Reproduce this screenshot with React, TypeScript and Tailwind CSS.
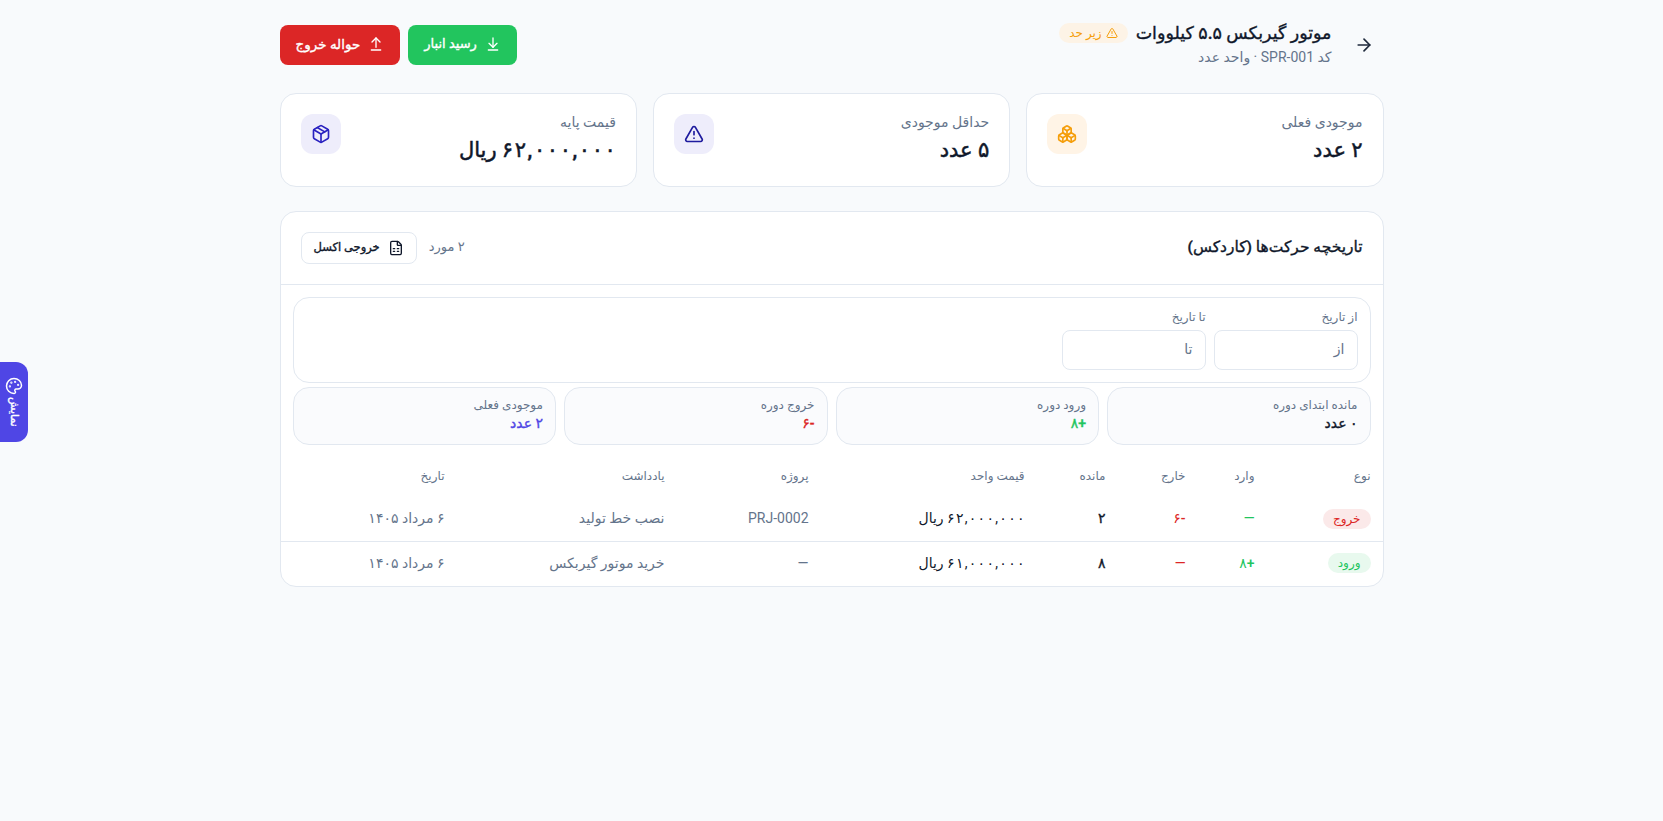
import { ArrowRight, ArrowDownToLine, ArrowUpFromLine, Boxes, FileSpreadsheet, Package, Palette, TriangleAlert } from "lucide-react";

const font = "font-['Roboto','Noto_Sans','DejaVu_Sans',sans-serif]";
// the bold cut of the fallback Arabic face runs too wide, so thicken the medium one
const heavy = "font-medium [-webkit-text-stroke:0.35px_currentColor]";
const heavier = "font-medium [-webkit-text-stroke:0.5px_currentColor]";

// letter-spacing is ignored on this script, so space the digits with a gap
function Digits({ value, gap }: { value: string; gap: string }) {
	return (
		<span dir="ltr" className={`inline-flex ${gap}`}>
			{value.split("").map((c, i) => (
				<span key={i}>{c}</span>
			))}
		</span>
	);
}

const stats = [
	{ label: "موجودی فعلی", num: "۲", unit: "عدد", box: "bg-[#fff4e6]", icon: <Boxes className="w-5 h-5 text-[#f59e0b]" /> },
	{ label: "حداقل موجودی", num: "۵", unit: "عدد", box: "bg-[#eeedfb]", icon: <TriangleAlert className="w-5 h-5 text-[#1e1b9e]" /> },
	{ label: "قیمت پایه", num: "۶۲,۰۰۰,۰۰۰", unit: "ریال", box: "bg-[#eeedfb]", icon: <Package className="w-5 h-5 text-[#2a22c0]" /> },
];

const summary = [
	{ label: "مانده ابتدای دوره", value: "۰ عدد", color: "text-[#0f172a]" },
	{ label: "ورود دوره", value: "+۸", color: "text-[#22c55e]" },
	{ label: "خروج دوره", value: "-۶", color: "text-[#dc2626]" },
	{ label: "موجودی فعلی", value: "۲ عدد", color: "text-[#4f46e5]" },
];

const rows = [
	{ type: "خروج", badge: "bg-[#fbe9e9] text-[#dc2626]", inVal: "—", outVal: "-۶", rest: "۲", price: "۶۲,۰۰۰,۰۰۰", project: "PRJ-0002", note: "نصب خط تولید", date: "۶ مرداد ۱۴۰۵" },
	{ type: "ورود", badge: "bg-[#e8f9ee] text-[#22c55e]", inVal: "+۸", outVal: "—", rest: "۸", price: "۶۱,۰۰۰,۰۰۰", project: "—", note: "خرید موتور گیربکس", date: "۶ مرداد ۱۴۰۵" },
];

export default function App() {
	return (
		<div dir="rtl" className={`min-h-[821px] bg-[#f8fafc] text-[#0f172a] ${font}`}>
			<div className="w-[1104px] mx-auto pt-[25px]">
				<div className="flex items-center justify-between h-10">
					<div className="flex items-center gap-3">
						<div className="w-10 h-10 flex items-center justify-center">
							<ArrowRight className="w-5 h-5 text-[#1e293b]" />
						</div>
						<div className="flex flex-col pb-1">
							<div className="flex items-center gap-2">
								<span className={`text-[17.5px] leading-7 ${heavy}`}>موتور گیربکس ۵.۵ کیلووات</span>
								<span className="flex items-center gap-1 h-5 px-2.5 rounded-full bg-[#fdf3e6] text-xs text-[#f59e0b]">
									<TriangleAlert className="w-3 h-3" />
									زیر حد
								</span>
							</div>
							<span className="text-sm leading-5 text-[#64748b]">کد SPR-001 · واحد عدد</span>
						</div>
					</div>
					<div className="flex items-center gap-2">
						<button className={`flex items-center gap-2 h-10 px-4 pb-[2px] rounded-lg bg-[#22c55e] text-white text-[13px] ${heavy}`}>
							<ArrowDownToLine className="w-4 h-4" />
							رسید انبار
						</button>
						<button className={`flex items-center gap-2 h-10 px-4 pb-[2px] rounded-lg bg-[#dc2626] text-white text-[13.5px] ${heavy}`}>
							<ArrowUpFromLine className="w-4 h-4" />
							حواله خروج
						</button>
					</div>
				</div>

				<div className="grid grid-cols-3 gap-4 mt-7">
					{stats.map((s) => (
						<div key={s.label} className="h-[94px] bg-white border border-[#e2e8f0] rounded-2xl p-5 flex items-start justify-between">
							<div className="flex flex-col gap-1 -mt-[2px]">
								<span className="text-sm leading-5 text-[#64748b]">{s.label}</span>
								<span className={`text-[21px] leading-7 ${heavier}`}>
									<Digits value={s.num} gap="gap-x-[1.6px]" /> {s.unit}
								</span>
							</div>
							<div className={`w-10 h-10 rounded-xl flex items-center justify-center ${s.box}`}>{s.icon}</div>
						</div>
					))}
				</div>

				<div className="mt-6 bg-white border border-[#e2e8f0] rounded-2xl">
					<div className="h-[73px] px-5 flex items-center justify-between border-b border-[#e2e8f0]">
						<span className={`text-[15.5px] ${heavy}`}>تاریخچه حرکت‌ها (کاردکس)</span>
						<div className="flex items-center gap-3">
							<span className="text-[13px] pb-[2px] text-[#64748b]">۲ مورد</span>
							<button className={`flex items-center gap-2 h-8 px-3 bg-white border border-[#e2e8f0] rounded-lg text-[11.5px] ${heavy}`}>
								<FileSpreadsheet className="w-4 h-4" />
								خروجی اکسل
							</button>
						</div>
					</div>

					<div className="px-3 pt-3">
						<div className="h-[86px] border border-[#e2e8f0] rounded-2xl px-3 pt-[9px] flex gap-2">
							{["از", "تا"].map((p, i) => (
								<div key={p} className="flex flex-col gap-[3px] w-[144px]">
									<span className="text-xs leading-5 text-[#64748b]">{i === 0 ? "از تاریخ" : "تا تاریخ"}</span>
									<div className="h-10 border border-[#e2e8f0] rounded-lg px-3 pb-[2px] flex items-center text-sm text-[#64748b]">{p}</div>
								</div>
							))}
						</div>
						<div className="grid grid-cols-4 gap-2 mt-1">
							{summary.map((s) => (
								<div key={s.label} className="h-[58px] bg-[#fafbfd] border border-[#e2e8f0] rounded-2xl px-3 pb-[2px] flex flex-col justify-center">
									<span className="text-xs leading-4 text-[#64748b]">{s.label}</span>
									<span className={`text-sm leading-5 ${heavy} ${s.color}`}>{s.value}</span>
								</div>
							))}
						</div>
					</div>

					<table className="w-full table-fixed mt-[13px] text-right">
						<colgroup>
							<col className="w-[116px]" />
							<col className="w-[69px]" />
							<col className="w-[80px]" />
							<col className="w-[81px]" />
							<col className="w-[216px]" />
							<col className="w-[144px]" />
							<col className="w-[220px]" />
							<col />
						</colgroup>
						<thead>
							<tr className="h-[38px] text-xs text-[#64748b]">
								{["نوع", "وارد", "خارج", "مانده", "قیمت واحد", "پروژه", "یادداشت", "تاریخ"].map((h) => (
									<th key={h} className="px-3 pb-[2px] font-medium">{h}</th>
								))}
							</tr>
						</thead>
						<tbody>
							{rows.map((r) => (
								<tr key={r.type} className="h-[45px] border-t border-[#e2e8f0] first:border-t-0 text-sm last:[&>td]:pb-[2px]">
									<td className="px-3">
										<span className={`inline-flex items-center h-5 px-2.5 rounded-full text-xs ${r.badge}`}>{r.type}</span>
									</td>
									<td className="px-3 font-medium text-[#22c55e]">{r.inVal}</td>
									<td className="px-3 font-medium text-[#dc2626]">{r.outVal}</td>
									<td className={`px-3 ${heavy}`}>{r.rest}</td>
									<td className="px-3">
										<Digits value={r.price} gap="gap-x-[1.3px]" /> ریال
									</td>
									<td className="px-3 text-[#64748b]">{r.project}</td>
									<td className="px-3 text-[#64748b]">{r.note}</td>
									<td className="px-3 text-[#64748b]">{r.date}</td>
								</tr>
							))}
						</tbody>
					</table>
				</div>
			</div>

			<div className="fixed left-0 top-[362px] w-[28px] h-[80px] bg-[#4f46e5] rounded-r-xl text-white flex flex-col items-center justify-center gap-[2px]">
				<Palette className="w-[18px] h-[18px]" />
				<span className={`text-[11px] leading-none [writing-mode:vertical-rl] ${heavy}`}>نمایش</span>
			</div>
		</div>
	);
}
